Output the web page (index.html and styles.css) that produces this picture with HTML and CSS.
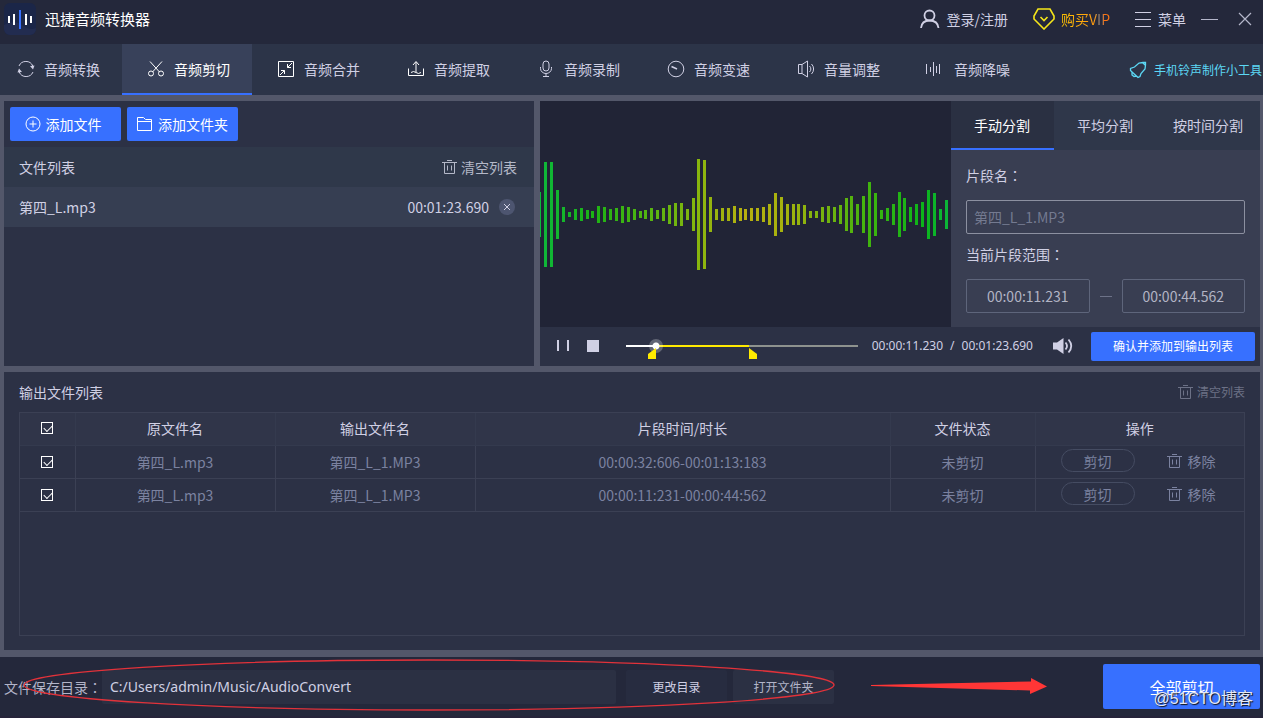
FILE: index.html
```html
<!DOCTYPE html>
<html lang="zh-CN">
<head>
<meta charset="utf-8">
<title>迅捷音频转换器</title>
<link rel="stylesheet" href="styles.css">
</head>
<body>
<svg class="defs" aria-hidden="true">
  <symbol id="trash" viewBox="0 0 15 16"><path d="M0 3.5H15M5 1.5H10M2.500 3.500V14.500H12.500V3.500M5.500 6.500V11.500M9.500 6.500V11.500" fill="none" stroke="currentColor"/></symbol>
</svg>

<header class="titlebar">
  <svg class="logo" viewBox="0 0 32 32"><rect width="32" height="32" rx="6" fill="#1b2648"/><path d="M0 22Q10 16 18 22T32 25V26A6 6 0 0 1 26 32H6A6 6 0 0 1 0 26Z" fill="#222c50"/><path d="M5 13V20M10 11V22M22 11V22M27 13V20" stroke="#fff" stroke-width="2"/><path d="M16 7V26" stroke="#3770ff" stroke-width="2"/></svg>
  <h1>迅捷音频转换器</h1>
  <div class="account">
    <button class="plain"><svg width="20" height="20" viewBox="0 0 20 20" fill="none" stroke="currentColor" stroke-width="1.800"><circle cx="9.500" cy="6.500" r="5"/><path d="M1 19C1.500 14.500 4 11.500 9.500 11.500S18 14.500 18.500 19"/></svg>登录/注册</button>
    <button class="plain"><svg width="22" height="22" viewBox="0 0 22 22" fill="none" stroke="#f5e61a" stroke-width="1.600"><path d="M5 1H17L21 8V11L11 21L1 11V8Z"/><path d="M7.500 9L11 12.500L14.500 9"/></svg><span class="vip">购买VIP</span></button>
    <button class="plain"><svg width="17" height="18" viewBox="0 0 17 18" stroke="currentColor"><path d="M0 2.500H16M0 9.500H16M0 16.500H16"/></svg>菜单</button>
    <button class="plain win" aria-label="最小化"><svg width="17" height="14" viewBox="0 0 17 14" stroke="currentColor"><path d="M0 7.500H17"/></svg></button>
    <button class="plain win" aria-label="关闭"><svg width="14" height="14" viewBox="0 0 14 14" stroke="currentColor" stroke-width="1.200"><path d="M1 1L13 13M13 1L1 13"/></svg></button>
  </div>
</header>

<nav class="tools">
  <button><svg viewBox="0 0 18 18"><path d="M2 6A7.500 7.500 0 0 1 15.800 6M16 12A7.500 7.500 0 0 1 2.200 12"/><path d="M13 6L17.500 5.500L16 9.500ZM5 12L.5 12.500L2 8.500Z" fill="currentColor" stroke="none"/></svg>音频转换</button>
  <button class="on"><svg viewBox="0 0 18 18"><path d="M3 1.500L12.500 12M15 1.500L5.500 12"/><circle cx="4" cy="13.500" r="2.500"/><circle cx="14" cy="13.500" r="2.500"/></svg>音频剪切</button>
  <button><svg class="bright" viewBox="0 0 18 18"><path d="M1.500 1.500H16.500V16.500H1.500ZM15 3L10.500 7.500M10.500 4V7.500H14M3 15L7.500 10.500M7.500 14V10.500H4"/></svg>音频合并</button>
  <button><svg class="bright" viewBox="0 0 18 18"><path d="M1.500 8.500V15.500H16.500V8.500M9 12V2M6 5L9 1.500L12 5M4 12.500Q6.500 10.500 9 12.500T14 12.500"/></svg>音频提取</button>
  <button><svg viewBox="0 0 18 18"><rect x="6" y="1" width="6" height="10" rx="3"/><path d="M3.500 7V8.500A5.500 5 0 0 0 14.500 8.500V7M9 13.500V16.500M6 16.500H12"/></svg>音频录制</button>
  <button><svg viewBox="0 0 18 18"><circle cx="9" cy="9" r="7.800"/><path d="M4.500 6.500L10 9" stroke-width="1.500"/></svg>音频变速</button>
  <button><svg viewBox="0 0 18 18"><path d="M1.500 4.500H5V13.500H1.500ZM5 4.500L10.500 1V17L5 13.500M12.500 6A4 4 0 0 1 12.500 12M14.500 4A7 7 0 0 1 14.500 14"/></svg>音量调整</button>
  <button><svg viewBox="0 0 18 18"><path d="M-.5 4V14M3.500 7V12M6.500 2V16M9.500 6V13M12.500 4V14"/></svg>音频降噪</button>
  <a class="ring" href="#"><svg viewBox="0 0 18 18"><path d="M3 11L1.500 9.500V7.500L5.500 6L10 2L14 1.500H16.500V4L16 8L12 12.500L11 15.500L9 16.500L8 15.500M2.500 10.500L8 15.500M3 11V14L5 15.500L7.500 15M13.500 1.500L16.500 4.500" stroke-width="1.300"/></svg>手机铃声制作小工具</a>
</nav>

<main>
  <div class="top">
    <section class="panel files">
      <div class="adders">
        <button class="blue add"><svg width="16" height="16" viewBox="0 0 16 16" fill="none" stroke="currentColor"><circle cx="8" cy="8" r="7"/><path d="M4.500 8H11.500M8 4.500V11.500"/></svg>添加文件</button>
        <button class="blue"><svg width="16" height="16" viewBox="0 0 16 16" fill="none" stroke="currentColor"><path d="M.5 14.500V1.500H6.500L8.500 3.500H14.500V14.500ZM.5 5.500H14.500"/></svg>添加文件夹</button>
      </div>
      <div class="row head"><h2>文件列表</h2><button class="plain clear"><svg width="15" height="16"><use href="#trash"/></svg>清空列表</button></div>
      <div class="row file"><span>第四_L.mp3</span><span class="dur">00:01:23.690</span><button class="del" aria-label="移除文件"><svg width="8" height="8" viewBox="0 0 8 8" stroke="currentColor"><path d="M1 1L7 7M7 1L1 7"/></svg></button></div>
    </section>

    <section class="panel editor">
      <div class="stage">
        <svg class="wave" viewBox="0 0 411 226">
          <defs><linearGradient id="tone" gradientUnits="userSpaceOnUse" x1="0" y1="0" x2="411" y2="0"><stop offset="0" stop-color="#0eb73c"/><stop offset=".13" stop-color="#1cb414"/><stop offset=".38" stop-color="#86b60e"/><stop offset=".5" stop-color="#b8b010"/><stop offset=".6" stop-color="#a4b30e"/><stop offset=".8" stop-color="#40b40e"/><stop offset=".93" stop-color="#0cb41a"/><stop offset="1" stop-color="#0cb43c"/></linearGradient></defs>
          <path fill="none" stroke="url(#tone)" stroke-width="3" d="M-.5 91V136M5.500 61V166M11.500 61V166M17.500 89V138M23.500 106V121M29.500 111V116M35.500 108V119M41.500 107V120M47.500 109V118M52.500 110V117M58.500 105V122M64.500 106V121M70.500 108V119M76.500 107V120M82.500 105V122M88.500 106V121M94.500 108V119M100.500 110V117M105.500 109V118M111.500 107V120M117.500 109V118M123.500 107V120M129.500 104V123M135.500 102V125M141.500 102V125M147.500 108V119M153.500 97V130M158.500 58V169M164.500 59V168M170.500 96V131M176.500 108V119M182.500 107V120M188.500 107V120M194.500 105V122M200.500 107V120M205.500 108V119M211.500 107V120M217.500 107V120M223.500 106V121M229.500 103V124M235.500 92V135M241.500 96V131M247.500 103V124M253.500 103V124M258.500 103V124M264.500 104V123M270.500 110V117M276.500 110V117M282.500 106V121M288.500 105V122M294.500 106V121M300.500 104V123M306.500 97V130M311.500 95V132M317.500 103V124M323.500 95V132M329.500 81V146M335.500 92V135M341.500 109V118M347.500 107V120M353.500 103V124M359.500 91V136M364.500 97V130M370.500 106V121M376.500 103V124M382.500 101V126M388.500 89V138M394.500 92V135M400.500 108V119M406.500 99V128"/>
        </svg>
        <div class="split">
          <div class="tabs"><button class="on">手动分割</button><button>平均分割</button><button>按时间分割</button></div>
          <form class="fields">
            <label for="seg">片段名<span class="colon" lang="zh-TW">：</span></label>
            <input id="seg" class="name" type="text" placeholder="第四_L_1.MP3">
            <label for="from">当前片段范围<span class="colon" lang="zh-TW">：</span></label>
            <div class="range"><input id="from" type="text" value="00:00:11.231"><i></i><input type="text" aria-label="结束时间" value="00:00:44.562"></div>
          </form>
        </div>
      </div>
      <div class="player">
        <button class="plain" aria-label="暂停"><svg width="13" height="12" viewBox="0 0 13 12" stroke="currentColor" stroke-width="2"><path d="M2 0V11M12 0V11"/></svg></button>
        <button class="plain stop" aria-label="停止"><svg width="12" height="12"><rect width="12" height="12" fill="currentColor"/></svg></button>
        <div class="seek">
          <input type="range" min="0" max="100" step="any" value="10.6" aria-label="播放进度">
          <svg class="flag start" viewBox="0 0 8 11"><path d="M8 0V11H0V6Z"/></svg>
          <svg class="flag end" viewBox="0 0 8 11"><path d="M0 0V11H8V6Z"/></svg>
        </div>
        <span class="clock"><span>00:00:11.230</span><span>/</span><span>00:01:23.690</span></span>
        <button class="plain" aria-label="音量"><svg width="20" height="16" viewBox="0 0 20 16"><path d="M0 4.500H4L10.500 0V16L4 11.500H0Z" fill="currentColor"/><path d="M12.500 4.500Q15.500 8 12.500 11.500M15.500 1.500Q21 8 15.500 14.500" fill="none" stroke="currentColor" stroke-width="1.800"/></svg></button>
        <button class="blue confirm">确认并添加到输出列表</button>
      </div>
    </section>
  </div>

  <section class="panel output">
    <div class="outhead"><h2>输出文件列表</h2><button class="plain"><svg width="15" height="16"><use href="#trash"/></svg>清空列表</button></div>
    <div class="grid">
      <table>
        <colgroup><col class="c-check"><col class="c-name"><col class="c-name"><col><col class="c-state"><col class="c-ops"></colgroup>
        <thead><tr><th><input type="checkbox" checked aria-label="全选"></th><th>原文件名</th><th>输出文件名</th><th>片段时间/时长</th><th>文件状态</th><th>操作</th></tr></thead>
        <tbody>
          <tr><td><input type="checkbox" checked aria-label="选择第1行"></td><td>第四_L.mp3</td><td>第四_L_1.MP3</td><td>00:00:32:606-00:01:13:183</td><td>未剪切</td><td><div class="ops"><button class="pill">剪切</button><button class="plain"><svg width="15" height="16"><use href="#trash"/></svg>移除</button></div></td></tr>
          <tr><td><input type="checkbox" checked aria-label="选择第2行"></td><td>第四_L.mp3</td><td>第四_L_1.MP3</td><td>00:00:11:231-00:00:44:562</td><td>未剪切</td><td><div class="ops"><button class="pill">剪切</button><button class="plain"><svg width="15" height="16"><use href="#trash"/></svg>移除</button></div></td></tr>
        </tbody>
      </table>
    </div>
  </section>
</main>

<footer>
  <label for="dir">文件保存目录<span class="colon" lang="zh-TW">：</span></label>
  <input id="dir" type="text" value="C:/Users/admin/Music/AudioConvert">
  <button class="dark first">更改目录</button>
  <button class="dark">打开文件夹</button>
  <button class="blue all">全部剪切</button>
  <svg class="marks" width="1060" height="61" viewBox="0 0 1060 61"><ellipse cx="429" cy="28" rx="405" ry="25" fill="none" stroke="#e2323a" stroke-width="1.300"/><path d="M871 28L1031 24.500V21L1047 29.500L1030 37V33.500L871 29Z" fill="#ff3636"/></svg>
  <span class="credit">@51CTO博客</span>
</footer>
</body>
</html>
```

FILE: styles.css
```css
* { box-sizing: border-box; }
body {
  margin: 0;
  min-height: 100vh;
  display: flex;
  flex-direction: column;
  background: #53576a;
  color: #d0d0e4;
  font: 14px/20px "Noto Sans CJK SC", "Noto Sans", sans-serif;
  overflow-x: hidden;
}
h1, h2 { margin: 0; font-size: 14px; font-weight: 400; }
button, input { font: inherit; color: inherit; margin: 0; }
button { border: 0; padding: 0; background: none; display: flex; align-items: center; justify-content: center; white-space: nowrap; }
svg { flex: none; display: block; }
.defs { position: absolute; width: 0; height: 0; }
.plain { gap: 6px; }
.blue { background: #3770ff; color: #fff; border-radius: 2px; }
.colon { font-family: "Noto Sans CJK TC", sans-serif; }

.titlebar { height: 44px; padding: 0 11px 6px 4px; display: flex; align-items: center; background: #24283b; }
.logo { width: 32px; height: 32px; }
.titlebar h1 { margin-left: 9px; font-size: 15px; color: #fff; }
.account { margin-left: auto; display: flex; align-items: center; gap: 25px; }
.account .win { margin-left: -10px; color: #b4b6ca; }
.account .win + .win { margin-left: -5px; }
.vip {
  background: linear-gradient(90deg, #ffc400, #ff9a10 68%, #8c8078 78%, #8c8078 84%, #ff7410 88%);
  background-clip: text;
  -webkit-background-clip: text;
  color: transparent;
}

.tools { height: 51px; display: flex; background: #2c3448; }
.tools button, .ring { display: flex; align-items: center; gap: 9px; }
.tools button { width: 130px; padding-left: 25px; justify-content: flex-start; border-bottom: 2px solid transparent; }
.tools button:first-child { width: 122px; padding-left: 17px; }
.tools .on { background: #38415a; border-color: #3770ff; color: #fff; }
.tools svg { width: 18px; height: 18px; fill: none; stroke: currentColor; overflow: visible; }
.tools .bright { color: #fff; }
.tools .ring { margin-left: auto; gap: 7px; padding-right: 1px; font-size: 12px; color: #5cd8f5; text-decoration: none; white-space: nowrap; }

main { flex: 1; padding: 6px 3px 7px 4px; display: flex; flex-direction: column; gap: 6px; }
.panel { background: #2c3145; }
.top { display: grid; grid-template-columns: 530fr 720fr; gap: 6px; min-height: 265px; }

.adders { display: flex; gap: 6px; padding: 6px; }
.adders .blue { width: 111px; height: 34px; gap: 5px; }
.adders .add { padding-right: 5px; }
.row { height: 40px; padding: 0 17px 0 15px; display: flex; align-items: center; }
.head { background: #2f384a; }
.clear { margin-left: auto; color: #b4b8c8; gap: 4px; }
.file { background: #363e52; padding-right: 19px; }
.dur { margin-left: auto; }
.del { width: 16px; height: 16px; margin-left: 10px; border-radius: 50%; background: #4d5570; }

.editor { display: flex; flex-direction: column; }
.stage { display: grid; grid-template-columns: 1fr 309px; flex: 1; background: #212436; }
.wave { width: 100%; min-width: 0; }
.split { display: flex; flex-direction: column; background: #393e52; }
.tabs { display: grid; grid-template-columns: repeat(3, 1fr); height: 49px; background: #2f374a; }
.tabs button { padding-right: 1px; border-bottom: 2px solid transparent; }
.tabs .on { background: #2a3042; border-color: #3770ff; color: #fff; }
.fields { padding: 15px 15px 13px; display: flex; flex-direction: column; }
.fields label { height: 20px; }
.fields input { height: 34px; min-width: 0; padding: 0 7px; border: 1px solid #5e657b; border-radius: 2px; background: transparent; color: #b2b4c4; }
.fields .name { margin: 15px 0 10px; border-color: #8c90a0; }
.name::placeholder { color: #747a90; opacity: 1; }
.range { margin-top: 15px; display: grid; grid-template-columns: 1fr 12px 1fr; gap: 10px; align-items: center; }
.range input { width: 100%; text-align: center; }
.range i { height: 1px; background: #6d7288; }

.player { height: 39px; padding: 0 5px 1px 16px; display: flex; align-items: center; font-size: 12px; }
.stop { margin-left: 18px; }
.seek { position: relative; flex: 1; margin: 0 14px 0 27px; }
.seek input { display: block; width: 100%; height: 14px; appearance: none; background: none; }
.seek input::-webkit-slider-runnable-track { height: 2px; background: linear-gradient(90deg, #fff 13%, #ffea00 13%, #ffea00 53%, #8e928e 53%); }
.seek input::-webkit-slider-thumb { appearance: none; width: 14px; height: 14px; margin-top: -6px; border-radius: 50%; background: radial-gradient(circle, #fff 3px, rgba(255, 255, 255, .25) 4px); }
.flag { position: absolute; top: 9px; width: 8px; height: 11px; fill: #ffea00; }
.start { right: 87%; }
.end { left: 53%; }
.clock { display: flex; gap: 7px; margin-right: 20px; font-family: "Noto Sans", sans-serif; }
.confirm { width: 164px; height: 29px; margin-left: 18px; }

.output { flex: 1; padding: 10px 15px 14px; display: flex; flex-direction: column; }
.outhead { display: flex; justify-content: space-between; margin-bottom: 10px; }
.outhead .plain { color: #6c7186; font-size: 12px; gap: 4px; }
.grid { flex: 1; border: 1px solid #3b4054; }
table { width: 100%; border-collapse: collapse; table-layout: fixed; }
.c-check { width: 55px; }
.c-name { width: 200px; }
.c-state { width: 145px; }
.c-ops { width: 209px; }
th, td { height: 33px; padding: 0; text-align: center; font-weight: 400; border: 1px solid #3b4054; }
th { height: 32px; padding-bottom: 2px; background: #303549; border-color: #343a4e; }
td { color: #7b82a0; }
tr > :first-child { border-left: 0; }
tr > :last-child { border-right: 0; }
thead th { border-top: 0; }
table input {
  appearance: none;
  display: block;
  width: 12px;
  height: 12px;
  margin: 0 auto;
  border: 1px solid #fff;
}
table input:checked::before { content: ""; display: block; width: 7px; height: 4px; margin: 2px 0 0 2px; border: solid #fff; border-width: 0 0 1px 1px; transform: rotate(-45deg); }
.ops { display: flex; align-items: center; padding: 0 0 2px 25px; gap: 32px; }
.pill { width: 74px; height: 23px; border: 1px solid #454c62; border-radius: 12px; }

footer { position: relative; height: 61px; padding: 0 3px 0 4px; display: flex; align-items: center; background: #24283b; border-bottom: 2px solid #26243a; }
footer label { width: 98px; white-space: nowrap; color: #b2b4c8; }
footer input { flex: 0 1 514px; min-width: 0; height: 34px; padding: 0 8px; border: 0; border-radius: 2px; background: #2b3043; font-family: "Noto Sans", "Noto Sans CJK SC", sans-serif; }
.dark { width: 101px; height: 34px; margin-left: 6px; border-radius: 2px; background: #2b3043; font-size: 12px; color: #b2b4c8; }
.dark.first { margin-left: 10px; background: #272c40; color: #d0d0e4; }
.all { width: 157px; height: 45px; margin-left: auto; font-size: 16px; }
.marks { position: absolute; left: 0; top: 0; pointer-events: none; }
.credit { position: absolute; right: 10px; bottom: 5px; color: #e4e8f4; font: 16px/24px "Liberation Sans", "Noto Sans CJK SC", sans-serif; text-shadow: 1px 1px 1px #111; }
```
